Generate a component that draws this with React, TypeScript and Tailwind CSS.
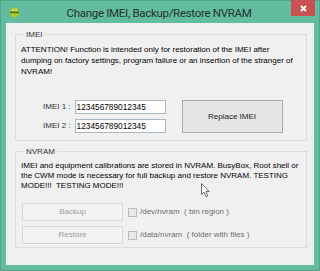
import React from 'react';

const ui = { fontFamily: '"Liberation Sans", Arial, sans-serif' };

// small android head used as the window icon
const AppIcon = () => (
  <svg width="11" height="11" viewBox="0 0 11 11">
    <circle cx="5.5" cy="5.5" r="5" fill="#a8cc2c" />
    <rect x="1" y="4.6" width="9" height="1.6" fill="#4f6b18" />
    <circle cx="4" cy="3" r="0.8" fill="#f4f9d8" />
    <circle cx="7" cy="3" r="0.8" fill="#f4f9d8" />
  </svg>
);

const Cursor = () => (
  <svg width="10" height="15" viewBox="0 0 10 15" className="absolute left-[200px] top-[182px]">
    <path d="M0.5 0.5 L0.5 11.5 L3 9.2 L5 13.8 L6.8 13 L4.9 8.6 L8.3 8.6 Z" fill="#fff" stroke="#6b6b6b" strokeWidth="1" />
  </svg>
);

const TextBox = ({ value }: { value: string }) => (
  <div className="w-[91px] h-[14px] bg-white border border-[#a9b7c4] flex items-center pl-[1px] text-[8.3px] text-black leading-none">
    {value}
  </div>
);

const DisabledButton = ({ label }: { label: string }) => (
  <div className="w-[101px] h-[18px] border border-[#d8d8d8] bg-[#f3f3f3] flex items-center justify-center text-[8px] text-[#9d9d9d]">
    {label}
  </div>
);

const DisabledCheck = ({ label }: { label: string }) => (
  <div className="flex items-center gap-[3px] text-[8px] text-[#6e6e6e] whitespace-pre">
    <div className="w-[9px] h-[9px] border border-[#bcbcbc] bg-[#e8e8e8]" />
    <span>{label}</span>
  </div>
);

export default function App() {
  return (
    <div className="relative w-[320px] h-[271px] bg-[#63bc9f] border border-[#4ea88b] flex flex-col" style={ui}>
      {/* title bar */}
      <div className="h-[22px] flex items-start relative">
        <div className="absolute left-[8px] top-[6px]"><AppIcon /></div>
        <div className="flex-1 text-center text-[11.5px] tracking-[-0.3px] leading-none pt-[7px] pr-[2px] text-[#22332d] font-['Roboto',sans-serif]">
          Change IMEI, Backup/Restore NVRAM
        </div>
        <div className="absolute right-[4px] top-[-1px] w-[24px] h-[16px] bg-[#c75251] flex items-center justify-center">
          <svg width="7" height="7" viewBox="0 0 7 7">
            <path d="M1 1 L6 6 M6 1 L1 6" stroke="#fff" strokeWidth="1.8" />
          </svg>
        </div>
      </div>

      {/* client area */}
      <div className="mx-[5px] h-[242px] bg-[#f0f0f0] pl-[9px] pr-[7px] pt-[6px] text-black">
        <fieldset className="border border-[#dcdcdc] h-[112px] px-[5px]">
          <legend className="ml-[3px] px-[2px] text-[8px] leading-[11px] text-[#333]">IMEI</legend>
          <p className="mt-[4px] text-[8px] leading-[11px] whitespace-nowrap">
            ATTENTION! Function is intended only for restoration of the IMEI after<br />
            dumping on factory settings, program failure or an insertion of the stranger of<br />
            NVRAM!
          </p>
          <div className="mt-[23px] flex items-start">
            <div className="flex flex-col gap-[5px] pl-[22px]">
              <div className="flex items-center gap-[4px]">
                <span className="text-[8px] text-[#333]">IMEI 1 :</span>
                <TextBox value="123456789012345" />
              </div>
              <div className="flex items-center gap-[4px]">
                <span className="text-[8px] text-[#333]">IMEI 2 :</span>
                <TextBox value="123456789012345" />
              </div>
            </div>
            <div className="ml-[16px] w-[101px] h-[33px] border border-[#adadad] bg-[#e6e6e6] flex items-center justify-center text-[8px] text-[#222]">
              Replace IMEI
            </div>
          </div>
        </fieldset>

        <fieldset className="mt-[5px] border border-[#dcdcdc] h-[102px] px-[5px]">
          <legend className="ml-[3px] px-[2px] text-[8px] leading-[11px] text-[#333]">NVRAM</legend>
          <p className="mt-[4px] text-[8px] leading-[10px] whitespace-nowrap">
            IMEI and equipment calibrations are stored in NVRAM. BusyBox, Root shell or<br />
            the CWM mode is necessary for full backup and restore NVRAM. TESTING<br />
            MODE!!!&nbsp; TESTING MODE!!!
          </p>
          <div className="mt-[12px] flex flex-col gap-[5px] pl-[1px]">
            <div className="flex items-center gap-[5px]">
              <DisabledButton label="Backup" />
              <DisabledCheck label="/dev/nvram  ( bin region )" />
            </div>
            <div className="flex items-center gap-[5px]">
              <DisabledButton label="Restore" />
              <DisabledCheck label="/data/nvram  ( folder with files )" />
            </div>
          </div>
        </fieldset>
      </div>
      <Cursor />
    </div>
  );
}
